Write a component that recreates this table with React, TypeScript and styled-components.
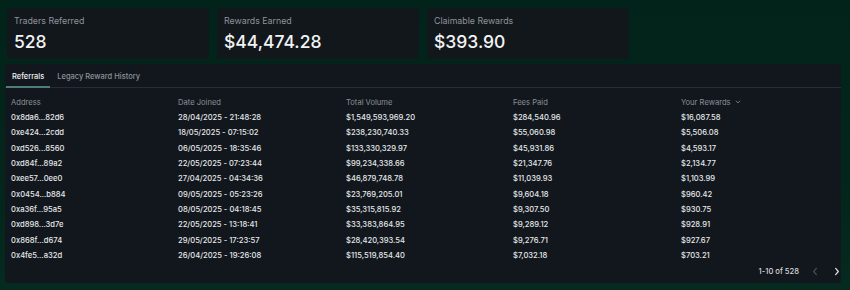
import styled, { createGlobalStyle } from "styled-components";

const GlobalStyle = createGlobalStyle`
  html, body {
    margin: 0;
    padding: 0;
    background: #03231a;
  }
  body {
    font-family: Inter, "Noto Sans", sans-serif;
    color: #e8eaec;
  }
`;

const Page = styled.div`
  width: 850px;
  height: 290px;
  box-sizing: border-box;
  padding: 8px 9px 0 5px;
  background: linear-gradient(180deg, #02231a 0%, #03251b 60%, #052a1f 100%);
  overflow: hidden;
`;

const Stats = styled.div`
  display: flex;
  gap: 8px;
  padding-left: 2px;
`;

const Card = styled.div`
  width: 202px;
  height: 51px;
  box-sizing: border-box;
  padding: 7px 7px 0;
  background: #12171c;
  border-radius: 3px;
`;

const Label = styled.div`
  font-size: 8.8px;
  line-height: 12px;
  color: #8e9399;
`;

const Value = styled.div`
  margin-top: 4px;
  font-size: 17.5px;
  line-height: 22px;
  font-weight: 500;
  color: #f2f3f4;
`;

const Panel = styled.div`
  margin-top: 5px;
  width: 836px;
  height: 219px;
  box-sizing: border-box;
  background: #12171d;
  border-radius: 3px;
  display: flex;
  flex-direction: column;
`;

const Tabs = styled.div`
  display: flex;
  height: 23px;
  border-bottom: 1px solid #272d34;
  padding-left: 1px;
`;

const Tab = styled.div<{ $active?: boolean }>`
  padding: 2px 6px 0;
  margin-right: 1px;
  display: flex;
  align-items: center;
  font-size: 7.5px;
  font-weight: 500;
  color: ${(p) => (p.$active ? "#f1f2f3" : "#8d9298")};
  border-bottom: 2px solid ${(p) => (p.$active ? "#4f7c79" : "transparent")};
  margin-bottom: -1px;
`;

const Table = styled.div`
  padding: 6px 0 0 6px;
`;

const Row = styled.div`
  display: grid;
  grid-template-columns: 167px 168px 167px 168px 1fr;
  height: 15.33px;
  align-items: center;
  font-size: 7.6px;
`;

const Head = styled(Row)`
  height: 16px;
  color: #8a8f95;
  font-weight: 400;
`;

const Cell = styled.div`
  color: #e6e8ea;
  font-weight: 500;
  white-space: nowrap;
`;

const SortHead = styled.span`
  display: inline-flex;
  align-items: center;
  gap: 4px;
`;

const Footer = styled.div`
  display: flex;
  justify-content: flex-end;
  align-items: center;
  height: 16px;
  margin-top: 0;
  font-size: 7.6px;
  font-weight: 500;
  color: #d7d9dc;
`;

const Count = styled.span`
  margin-right: 12px;
`;

const PageButton = styled.div<{ $disabled?: boolean }>`
  width: 8px;
  margin-left: ${(p) => (p.$disabled ? "0" : "14px")};
  display: flex;
  justify-content: center;
  color: ${(p) => (p.$disabled ? "#4a5058" : "#e6e8ea")};
`;

const Chevron = ({ dir }: { dir: "left" | "right" }) => (
  <svg width="8" height="9" viewBox="0 0 8 10" fill="none">
    <path
      d={dir === "left" ? "M5.5 1.5 2.5 5l3 3.5" : "M2.5 1.5 5.5 5l-3 3.5"}
      stroke="currentColor"
      strokeWidth="1.3"
      strokeLinecap="round"
      strokeLinejoin="round"
    />
  </svg>
);

const rows = [
  ["0x8da6...82d6", "28/04/2025 - 21:48:28", "$1,549,593,969.20", "$284,540.96", "$16,087.58"],
  ["0xe424...2cdd", "18/05/2025 - 07:15:02", "$238,230,740.33", "$55,060.98", "$5,506.08"],
  ["0xd526...8560", "06/05/2025 - 18:35:46", "$133,330,329.97", "$45,931.86", "$4,593.17"],
  ["0xd84f...89a2", "22/05/2025 - 07:23:44", "$99,234,338.66", "$21,347.76", "$2,134.77"],
  ["0xee57...0ee0", "27/04/2025 - 04:34:36", "$46,879,748.78", "$11,039.93", "$1,103.99"],
  ["0x0454...b884", "09/05/2025 - 05:23:26", "$23,769,205.01", "$9,604.18", "$960.42"],
  ["0xa36f...95a5", "08/05/2025 - 04:18:45", "$35,315,815.92", "$9,307.50", "$930.75"],
  ["0xd898...3d7e", "22/05/2025 - 13:18:41", "$33,383,864.95", "$9,289.12", "$928.91"],
  ["0x868f...d674", "29/05/2025 - 17:23:57", "$28,420,393.54", "$9,276.71", "$927.67"],
  ["0x4fe5...a32d", "26/04/2025 - 19:26:08", "$115,519,854.40", "$7,032.18", "$703.21"],
];

const stats = [
  ["Traders Referred", "528"],
  ["Rewards Earned", "$44,474.28"],
  ["Claimable Rewards", "$393.90"],
];

export default function App() {
  return (
    <>
      <GlobalStyle />
      <Page>
        <Stats>
          {stats.map(([label, value]) => (
            <Card key={label}>
              <Label>{label}</Label>
              <Value>{value}</Value>
            </Card>
          ))}
        </Stats>
        <Panel>
          <Tabs>
            <Tab $active>Referrals</Tab>
            <Tab>Legacy Reward History</Tab>
          </Tabs>
          <Table>
            <Head>
              <div>Address</div>
              <div>Date Joined</div>
              <div>Total Volume</div>
              <div>Fees Paid</div>
              <SortHead>
                Your Rewards
                <svg width="6" height="6" viewBox="0 0 10 10" fill="none">
                  <path d="M2 3.5 5 6.5 8 3.5" stroke="currentColor" strokeWidth="1.4" strokeLinecap="round" strokeLinejoin="round" />
                </svg>
              </SortHead>
            </Head>
            {rows.map((r) => (
              <Row key={r[0]}>
                {r.map((c, i) => (
                  <Cell key={i}>{c}</Cell>
                ))}
              </Row>
            ))}
          </Table>
          <Footer>
            <Count>1-10 of 528</Count>
            <PageButton $disabled>
              <Chevron dir="left" />
            </PageButton>
            <PageButton>
              <Chevron dir="right" />
            </PageButton>
          </Footer>
        </Panel>
      </Page>
    </>
  );
}
